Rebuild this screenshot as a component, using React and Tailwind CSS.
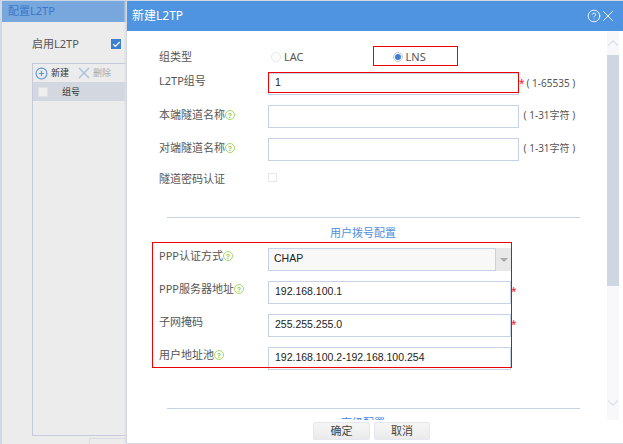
import React from "react";
import { CircleHelp, X, CirclePlus, ChevronUp, ChevronDown, Check } from "lucide-react";

const font = "font-['Noto_Sans','Noto_Sans_CJK_SC',sans-serif]";

function Tip() {
  return (
    <span className="inline-flex h-[10px] w-[10px] shrink-0 items-center justify-center rounded-full border-[1.5px] border-[#a6d862] font-['Liberation_Sans',sans-serif] text-[7px] leading-none font-bold text-[#8cc63f]">
      ?
    </span>
  );
}

function Field({ label, tip, value, hint, star, top, height = "h-[23px]", width = "w-[251px]", labelClass = "" }) {
  return (
    <div className={`flex items-start ${top}`}>
      <div className={`flex w-[109px] items-center text-[11px] leading-[16px] text-[#555] ${labelClass}`}>
        {label}
        {tip && <Tip />}
      </div>
      <div className={`${width} ${height} flex items-center border border-[#c5d3e6] bg-white pb-[2px] pl-[6px] font-['Liberation_Sans',sans-serif] text-[10.5px] text-[#222]`}>
        {value}
      </div>
      {star && <span className="text-[10px] leading-[20px] text-[#f01030]">*</span>}
      {hint && <span className="ml-[2px] whitespace-pre text-[10px] leading-[20px] text-[#555]">{hint}</span>}
    </div>
  );
}

function Radio({ on }) {
  return (
    <span className={`flex h-[10px] w-[10px] items-center justify-center rounded-full border ${on ? "border-[#b8c8dc]" : "border-[#e6e6e6]"}`}>
      {on && <span className="h-[6px] w-[6px] rounded-full bg-[#3f7fd0]" />}
    </span>
  );
}

function BackWindow() {
  return (
    <div className="absolute top-0 left-0 flex h-[444px] w-[623px] flex-col border-t border-l-2 border-[#d0d8e6] bg-[#ececec] text-[#555]">
      <div className="flex h-[21px] items-center bg-[#77a7dd] pl-[6px] text-[11px] text-[#3a78c8]">配置L2TP</div>
      <div className="mt-[14px] flex items-center pl-[30px] text-[11px] leading-[16px]">
        <span className="w-[79px]">启用L2TP</span>
        <span className="flex h-[10px] w-[10px] items-center justify-center bg-[#3f7fd0]">
          <Check size={9} strokeWidth={3} className="text-white" />
        </span>
      </div>
      <div className="mt-[11px] ml-[30px] flex h-[372px] flex-col border-t border-l border-[#c6cadc]">
        <div className="flex h-[18px] items-center pl-[2px] text-[9px]">
          <CirclePlus size={13} className="text-[#5b94d6]" />
          <span className="ml-[3px] text-[#333]">新建</span>
          <X size={18} strokeWidth={2.2} className="-my-[4px] ml-[6px] text-[#b0c4de]" />
          <span className="text-[#aaa]">删除</span>
        </div>
        <div className="flex h-[19px] items-center border-t border-[#d3d8e0] bg-[#d3d8e0] pl-[5px] text-[9px] text-[#333]">
          <span className="h-[10px] w-[10px] border border-[#dfe2e8] bg-[#eeeeee]" />
          <span className="ml-[14px]">组号</span>
        </div>
      </div>
      <div className="ml-[30px] h-[8px] border-t border-[#c6cadc] pl-[57px]">
        <div className="mt-[2px] h-[6px] w-[40px] border-t border-l border-[#dcdde4]" />
      </div>
    </div>
  );
}

function Dialog() {
  return (
    <div className="absolute top-px left-[126px] flex h-[443px] w-[497px] flex-col border-b border-l border-[#d5d8de] bg-white shadow-[-1px_0_2px_#d8dbe2]">
      <div className="flex h-[30px] items-center justify-between bg-[#4f94e0] pr-[6px] pl-[5px] text-[12px] text-white">
        <span>新建L2TP</span>
        <span className="flex items-center">
          <CircleHelp size={14} strokeWidth={1.5} />
          <X size={18} strokeWidth={1.2} className="-ml-[2px]" />
        </span>
      </div>
      <div className="flex h-[389px] shrink-0">
        <div className="w-[480px] overflow-hidden pl-[32px]">
          <div className="mt-[15px] flex h-[20px] items-start text-[11px] leading-[16px] text-[#555]">
            <span className="mt-[3px] w-[112px]">组类型</span>
            <span className="mt-[3px] flex items-center gap-[3px]"><Radio />LAC</span>
            <span className="mt-[3px] ml-[89px] flex items-center gap-[3px]"><Radio on />LNS</span>
          </div>
          <Field label="L2TP组号" value="1" star height="h-[22px]" hint="( 1-65535 )" top="mt-[7px]" />
          <Field label="本端隧道名称" tip hint=" ( 1-31字符 )" top="mt-[10px] [&>div:first-child]:mt-[2px]" />
          <Field label="对端隧道名称" tip hint=" ( 1-31字符 )" top="mt-[10px] [&>div:first-child]:mt-[2px]" />
          <div className="mt-[10px] flex items-start text-[11px] leading-[16px] text-[#555]">
            <span className="w-[109px]">隧道密码认证</span>
            <span className="mt-[2px] h-[9px] w-[9px] border border-[#e8e8e8]" />
          </div>
          <div className="mt-[30px] ml-[8px] w-[413px] border-t border-[#c5d3e6]" />
          <div className="ml-[8px] w-[392px] pt-[7px] text-center text-[11px] leading-[16px] text-[#4f8fe0]">用户拨号配置</div>
          <div className="mt-[7px] flex items-start">
            <div className="flex w-[109px] items-center text-[11px] leading-[16px] text-[#555]">PPP认证方式<Tip /></div>
            <div className="flex h-[23px] w-[243px]">
              <div className="flex flex-1 items-center border border-[#c5d3e6] bg-[#f8f8f8] pb-[2px] pl-[5px] font-['Liberation_Sans',sans-serif] text-[10.5px] text-[#222]">CHAP</div>
              <div className="flex w-[15px] items-center justify-center bg-[#e8e8e8]">
                <span className="h-0 w-0 border-x-[4px] border-t-[4px] border-x-transparent border-t-[#a8a8a8]" />
              </div>
            </div>
          </div>
          <Field label="PPP服务器地址" tip value="192.168.100.1" star width="w-[243px]" top="mt-[10px]" />
          <Field label="子网掩码" value="255.255.255.0" star width="w-[243px]" top="mt-[10px]" />
          <Field label="用户地址池" tip value="192.168.100.2-192.168.100.254" width="w-[243px]" top="mt-[10px]" />
          <div className="mt-[38px] ml-[8px] w-[413px] border-t border-[#c5d3e6]" />
          <div className="ml-[8px] w-[392px] pt-[6px] text-center text-[11px] leading-[16px] text-[#3f7fe8]">高级配置</div>
        </div>
        <div className="flex w-[12px] flex-col bg-[#f8f8fa]">
          <div className="flex h-[24px] items-center justify-center">
            <ChevronUp size={18} strokeWidth={2} className="shrink-0 text-[#dfe2ea]" />
          </div>
          <div className="h-[231px] bg-[#d0d5e2]" />
          <div className="flex flex-1 items-end justify-center pb-[8px]">
            <ChevronDown size={18} strokeWidth={2} className="shrink-0 text-[#dfe2ea]" />
          </div>
        </div>
      </div>
      <div className="flex gap-[4px] pt-[2px] pl-[186px] text-[11px] text-[#444]">
        <div className="flex h-[18px] w-[57px] items-center justify-center rounded-[2px] border border-[#e4e7ee] bg-linear-to-b from-[#f6f6f6] to-[#ebebeb]">确定</div>
        <div className="flex h-[18px] w-[56px] items-center justify-center rounded-[2px] border border-[#e4e7ee] bg-linear-to-b from-[#f6f6f6] to-[#ebebeb]">取消</div>
      </div>
    </div>
  );
}

export default function App() {
  return (
    <div className={`relative h-[444px] w-[623px] overflow-hidden ${font}`}>
      <BackWindow />
      <Dialog />
      {/* red marks drawn over the shot */}
      <div className="absolute top-[46px] left-[373px] h-[20px] w-[85px] border border-[#f00000]" />
      <div className="absolute top-[72px] left-[268px] h-[21px] w-[251px] border border-[#f00000]" />
      <div className="absolute top-[242px] left-[152px] h-[126px] w-[360px] border border-[#f00000]" />
    </div>
  );
}
